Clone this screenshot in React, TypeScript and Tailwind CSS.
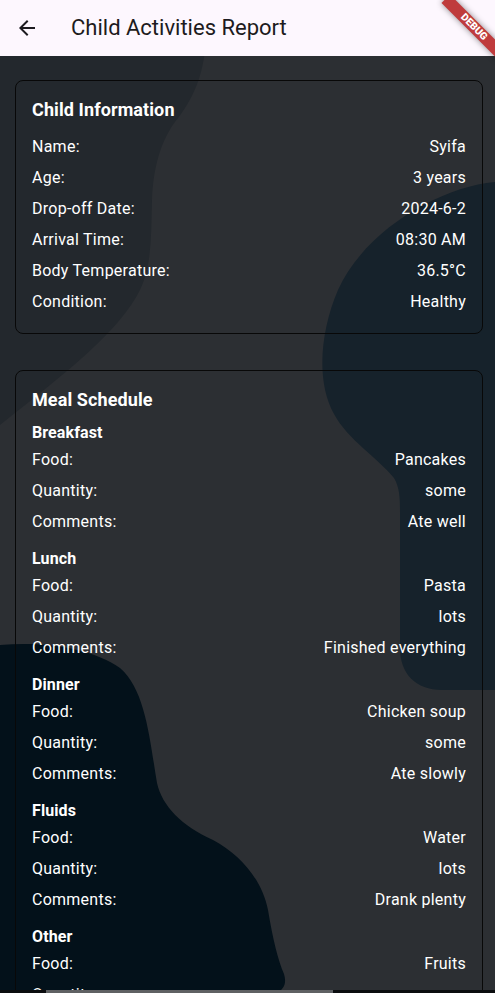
import React from "react";

const childInfo: [string, string][] = [
  ["Name:", "Syifa"],
  ["Age:", "3 years"],
  ["Drop-off Date:", "2024-6-2"],
  ["Arrival Time:", "08:30 AM"],
  ["Body Temperature:", "36.5°C"],
  ["Condition:", "Healthy"],
];

const meals: { name: string; food: string; qty: string; comments: string }[] = [
  { name: "Breakfast", food: "Pancakes", qty: "some", comments: "Ate well" },
  { name: "Lunch", food: "Pasta", qty: "lots", comments: "Finished everything" },
  { name: "Dinner", food: "Chicken soup", qty: "some", comments: "Ate slowly" },
  { name: "Fluids", food: "Water", qty: "lots", comments: "Drank plenty" },
  { name: "Other", food: "Fruits", qty: "some", comments: "Enjoyed" },
];

function Row({ label, value }: { label: string; value: string }) {
  return (
    <div className="flex h-[31px] items-center justify-between text-[16px] leading-[19px] tracking-[0.25px] text-white">
      <span>{label}</span>
      <span>{value}</span>
    </div>
  );
}

function Card({ title, gapClass, children }: { title: string; gapClass: string; children: React.ReactNode }) {
  return (
    <div className="rounded-[8px] border border-[#080808] px-[16px] py-[16px]">
      <div className={`${gapClass} h-[26px] text-[18px] font-bold leading-[26px] tracking-[0.1px] text-white`}>{title}</div>
      {children}
    </div>
  );
}

export default function App() {
  return (
    <div className="relative h-[993px] w-[495px] overflow-hidden bg-[#2c2f33] font-['Roboto',sans-serif]">
      <svg
        className="absolute left-0 top-0"
        width="495"
        height="993"
        viewBox="0 0 495 993"
      >
        <path
          d="M0,40 L206,40 C204,70 196,95 178,118 C160,140 153,170 152,200 C151,235 152,265 140,290 C120,330 70,370 0,425 Z"
          fill="#23282d"
        />
        <path
          d="M495,182 C440,187 365,230 338,290 C320,332 316,382 334,414 C348,440 378,458 394,478 C400,488 400,500 400,512 L400,648 C400,674 416,690 442,690 L495,690 Z"
          fill="#16222b"
        />
        <path
          d="M0,645 C45,641 92,648 120,668 C146,690 150,742 157,783 C162,806 182,826 213,840 C241,855 262,880 268,910 C273,940 278,960 284,974 C289,990 276,996 260,996 L0,996 Z"
          fill="#03111a"
        />
      </svg>

      <header className="relative z-10 flex h-[56px] items-center bg-[#fdf7fe]">
        <div className="ml-[15px] flex h-[24px] w-[24px] items-center justify-center">
          <svg width="24" height="24" viewBox="0 0 24 24" fill="#1d1b20">
            <path d="M20 11H7.83l5.59-5.59L12 4l-8 8 8 8 1.41-1.41L7.83 13H20v-2z" />
          </svg>
        </div>
        <div className="ml-[32px] text-[22px] leading-[28px] text-[#1d1b20]">Child Activities Report</div>
      </header>

      <main className="relative z-10 flex w-[483px] flex-col gap-[36px] pl-[15px] pt-[24px]">
        <Card title="Child Information" gapClass="mb-[8px]">
          {childInfo.map(([l, v]) => (
            <Row key={l} label={l} value={v} />
          ))}
        </Card>
        <Card title="Meal Schedule" gapClass="mb-[9px]">
          {meals.map((m, i) => (
            <div key={m.name} className={i > 0 ? "mt-[11px]" : ""}>
              <div className="flex h-[22px] items-center text-[16px] font-bold tracking-[0.1px] text-white">{m.name}</div>
              <Row label="Food:" value={m.food} />
              <Row label="Quantity:" value={m.qty} />
              <Row label="Comments:" value={m.comments} />
            </div>
          ))}
        </Card>
      </main>

      <div className="absolute left-[434px] top-[21px] z-20 flex h-[12px] w-[80px] rotate-45 items-center justify-center bg-[#bf3b3c] shadow-[0_0_6px_rgba(0,0,0,0.45)]">
        <span className="text-[10.2px] font-black leading-[10px] text-white">DEBUG</span>
      </div>

      <div className="absolute bottom-0 left-0 z-20 flex h-[3px] w-[495px] bg-[#0b0d0f]">
        <div className="ml-[46px] h-[3px] w-[287px] bg-[#5f6163]" />
      </div>
    </div>
  );
}
